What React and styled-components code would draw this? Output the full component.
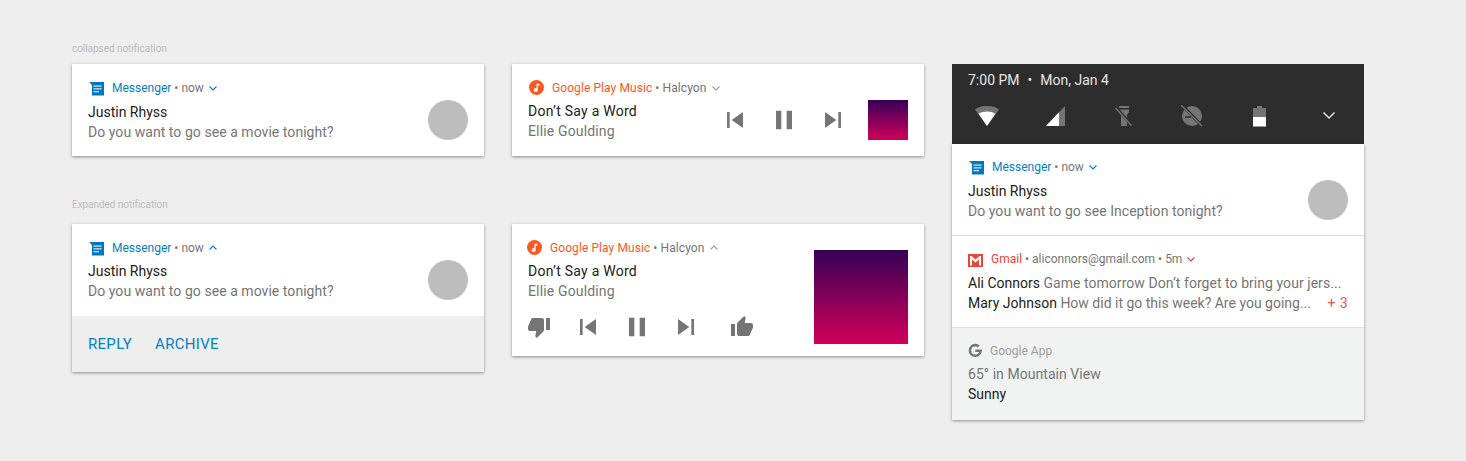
import React from "react";
import styled, { createGlobalStyle } from "styled-components";

const Global = createGlobalStyle`
  html, body { margin: 0; padding: 0; background: #eeeeee; }
  body { font-family: Roboto, "Liberation Sans", sans-serif; -webkit-font-smoothing: antialiased; }
`;

const Page = styled.div`
  width: 1466px; height: 461px; box-sizing: border-box; overflow: hidden;
  padding: 42px 0 0 72px;
  display: grid;
  grid-template-columns: 412px 412px 412px;
  grid-template-rows: 22px 92px 68px auto;
  column-gap: 28px;
`;
const Caption = styled.div`
  font-size: 10px; line-height: 12px; color: #bbbbbb; letter-spacing: -.05px;
  grid-column: 1;
  grid-row: ${p => p.$row};
  align-self: ${p => (p.$low ? "end" : "start")};
  margin-top: ${p => (p.$low ? "0" : "1px")};
  margin-bottom: ${p => (p.$low ? "13px" : "0")};
`;
const Card = styled.section`
  background: #fff;
  box-shadow: 0 1px 3px rgba(0,0,0,.42);
  align-self: ${p => (p.$col ? "start" : "stretch")};
  grid-column: ${p => p.$col};
  grid-row: ${p => p.$row};
`;
const SideColumn = styled.div`
  grid-column: 3; grid-row: 2 / 5;
  align-self: start;
  display: flex; flex-direction: column;
`;
const QuickBar = styled.div`
  background: #2d2d2d; height: 80px; box-sizing: border-box; padding: 8px 16px 0;
`;
const Clock = styled.div`
  color: #e6e6e6; font-size: 14px; line-height: 16px; display: flex; gap: 8px;
`;
const QuickIcons = styled.div`
  display: flex; margin: 16px 0 0 7px; height: 24px; align-items: center;
`;
const QuickSlot = styled.span`
  display: flex; width: ${p => p.$w}px;
`;
const Section = styled.div`
  display: flex; align-items: flex-start;
  box-sizing: border-box;
  height: ${p => p.$h}px;
  padding: ${p => p.$top ?? 16}px 16px 0;
  background: ${p => p.$bg || "#fff"};
  border-top: ${p => (p.$rule ? "1px solid #dcdcdc" : "0")};
`;
const Main = styled.div`
  flex: 1; min-width: 0;
`;
const Header = styled.div`
  display: flex; align-items: center; height: 16px; font-size: 12px; line-height: 16px;
  margin-left: ${p => p.$shift ?? 1}px;
  letter-spacing: ${p => p.$track ?? 0}px;
  color: #757575;
  white-space: pre;
`;
const HeadIcon = styled.span`
  display: flex; flex: none; width: 16px; height: 16px;
`;
const AppName = styled.span`
  color: ${p => p.$c}; margin-left: ${p => p.$gap ?? 7}px;
`;
const Caret = styled.svg`
  width: 10px; height: 10px; margin-left: ${p => p.$gap ?? 4}px; flex: none;
  fill: none; stroke: ${p => p.$c}; stroke-width: 1.1;
`;
const Title = styled.div`
  font-size: 14px; line-height: 20px; color: #212121;
  margin-top: ${p => p.$top ?? 6}px; white-space: pre;
  letter-spacing: ${p => p.$track ?? 0}px;
`;
const Body = styled.div`
  font-size: 14px; line-height: 20px; color: #757575; white-space: pre;
  letter-spacing: ${p => p.$track ?? 0.05}px;
  margin-top: ${p => p.$top ?? 0}px;
  display: flex; justify-content: space-between;
`;
const Strong = styled.span`color: #212121;`;
const Muted = styled.span`color: #757575; letter-spacing: .05px;`;
const Count = styled.span`color: #e8564a; letter-spacing: .4px;`;
const Avatar = styled.div`
  width: 40px; height: 40px; border-radius: 50%; background: #bdbdbd; flex: none;
  margin-top: ${p => p.$top ?? 20}px;
`;
const Actions = styled.div`
  background: #eeeeee; height: 56px; display: flex; align-items: center; gap: 23px; padding-left: 16px;
`;
const Action = styled.span`
  color: #0280c8; font-size: 15px; letter-spacing: .3px;
`;
const Album = styled.div`
  width: ${p => p.$s}px; height: ${p => p.$s}px; flex: none; margin-top: ${p => p.$top}px;
  background: linear-gradient(#370058, #d1005a);
`;
const Controls = styled.div`
  display: flex; flex: none; align-items: center; align-self: flex-start;
  margin: ${p => p.$m};
  gap: ${p => p.$gap}px;
`;
const IconGlyph = styled.svg`
  width: ${p => p.$s || 32}px; height: ${p => p.$s || 32}px; fill: #757575; flex: none; display: block;
`;
const Thumb = styled(IconGlyph)`
  margin: ${p => p.$m};
`;
const MusicCard = styled.div`
  display: flex; padding: ${p => p.$p}; box-sizing: border-box; height: ${p => p.$h}px;
`;

const P = {
  prev: "M6 6h2v12H6zm3.5 6l8.5 6V6z",
  pause: "M6 19h4V5H6v14zm8-14v14h4V5h-4z",
  next: "M6 18l8.5-6L6 6v12zM16 6v12h2V6h-2z",
  up: "M1 21h4V9H1v12zm22-11c0-1.1-.9-2-2-2h-6.31l.95-4.57.03-.32c0-.41-.17-.79-.44-1.06L14.17 1 7.59 7.59C7.22 7.95 7 8.45 7 9v10c0 1.1.9 2 2 2h9c.83 0 1.54-.5 1.84-1.22l3.02-7.05c.09-.23.14-.47.14-.73v-2z",
  down: "M15 3H6c-.83 0-1.54.5-1.84 1.22l-3.02 7.05c-.09.23-.14.47-.14.73v2c0 1.1.9 2 2 2h6.31l-.95 4.57-.03.32c0 .41.17.79.44 1.06L9.83 23l6.59-6.59c.36-.36.58-.86.58-1.41V5c0-1.1-.9-2-2-2zm4 0v12h4V3h-4z",
};
const Glyph = ({ d, s }) => <IconGlyph $s={s} viewBox="0 0 24 24"><path d={d} /></IconGlyph>;

const MessengerIcon = () => (
  <svg width="16" height="16" viewBox="0 -1 16 16">
    <path d="M0 1h15v13.500H3V4z" fill="#0277bd" />
    <path d="M4.500 4.500h8v1.200h-8zM4.500 7.200h8v1.200h-8zM4.500 10h5.500v1.200H4.500z" fill="#cfe8f6" />
  </svg>
);
const MusicIcon = () => (
  <svg width="16" height="16" viewBox="0 0 16 16">
    <circle cx="7.500" cy="7.500" r="7.500" fill="#ff5722" />
    <path d="M7.500 3.800h3v1.800H8.700v4.400a2 2 0 1 1-1.200-1.800z" fill="#fff" />
  </svg>
);
const GmailIcon = () => (
  <svg width="16" height="16" viewBox="0 -2 16 16">
    <rect y="1" width="15" height="13" fill="#e8453c" />
    <path d="M2 12.500V3h1.500l4 3.600L11.500 3H13v9.500h-2V6.400L7.500 9.500 4 6.400v6.100z" fill="#fff" />
  </svg>
);
const GoogleIcon = () => (
  <svg width="16" height="16" viewBox="0 0 16 16">
    <path d="M7.300.8a6.600 6.600 0 1 0 0 13.200c3.800 0 6.500-2.700 6.500-6.400 0-.5 0-.8-.1-1.200H7.300v2.500H11c-.4 1.700-1.800 2.700-3.700 2.700a4 4 0 0 1 0-8.200c1 0 1.900.3 2.600 1l1.900-1.900A6.400 6.400 0 0 0 7.300.8z" fill="#757575" />
  </svg>
);

const Head = ({ icon, name, color, rest, caret = "down", caretColor, gap, caretGap, shift, track }) => (
  <Header $shift={shift} $track={track}>
    <HeadIcon>{icon}</HeadIcon>
    <AppName $c={color} $gap={gap}>{name}</AppName>{rest}
    <Caret $c={caretColor || color} $gap={caretGap} viewBox="0 0 10 10">
      <path d={caret === "down" ? "M1.500 3.500 5 7l3.500-3.500" : "M1.500 6.500 5 3l3.500 3.500"} />
    </Caret>
  </Header>
);

const Messenger = ({ caret, titleTop, text, avatarTop }) => (
  <>
    <Main>
      <Head icon={<MessengerIcon />} name="Messenger" color="#0280c8" rest=" • now" caret={caret} />
      <Title $top={titleTop}>Justin Rhyss</Title>
      <Body>{text}</Body>
    </Main>
    <Avatar $top={avatarTop} />
  </>
);

const WifiIcon = () => (
  <svg width="24" height="24" viewBox="0 0 24 24">
    <path d="M0 5.500C3 3 7.200 2 12 2s9 1 12 3.500L12 22z" fill="#757575" />
    <path d="M3.600 9.800C6 8.300 8.800 7.500 12 7.500s6 .8 8.400 2.300L12 22z" fill="#fff" />
  </svg>
);
const SignalIcon = () => (
  <svg width="20" height="22" viewBox="0 0 20 22">
    <path d="M0 21 19 1v20z" fill="#757575" />
    <path d="M0 21 13 7.300V21z" fill="#fff" />
  </svg>
);
const FlashIcon = () => (
  <svg width="20" height="22" viewBox="0 0 20 22">
    <path d="M5 1h10v2H5zM5 4.500h10V7l-2 3v11H7V10L5 7z" fill="#757575" />
    <path d="M2.800 3.500l15 17" stroke="#2d2d2d" strokeWidth="3" />
    <path d="M1.500 3l16 17.800" stroke="#757575" strokeWidth="1.400" />
  </svg>
);
const CircleOffIcon = () => (
  <svg width="22" height="22" viewBox="0 0 22 22">
    <circle cx="11" cy="11" r="10" fill="#757575" />
    <path d="M4 12h6" stroke="#2d2d2d" strokeWidth="1.500" />
    <path d="M1 0l20 21" stroke="#2d2d2d" strokeWidth="3" />
    <path d="M0 0l21 21" stroke="#757575" strokeWidth="1.300" />
  </svg>
);
const BatteryIcon = () => (
  <svg width="14" height="22" viewBox="0 0 14 22">
    <path d="M4 1h5v2h4v9H0V3h4z" fill="#757575" />
    <rect y="12" width="13" height="9.500" fill="#fff" />
  </svg>
);
const DownIcon = () => (
  <svg width="14" height="10" viewBox="0 1 14 10" fill="none">
    <path d="M1.500 2.500 7 8l5.500-5.500" stroke="#e6e6e6" strokeWidth="1.500" />
  </svg>
);

export default function App() {
  const q = "Do you want to go see a movie tonight?";
  return (
    <>
      <Global />
      <Page>
        <Caption $row={1}>collapsed notification</Caption>
        <Card $col={1} $row={2}>
          <Section $h={92}>
            <Messenger text={q} />
          </Section>
        </Card>
        <Card $col={2} $row={2}>
          <MusicCard $h={92} $p="16px 16px 0">
            <Main>
              <Head icon={<MusicIcon />} name="Google Play Music" color="#ff5722" rest=" • Halcyon" caretColor="#9e9e9e" gap={7} caretGap={5} shift={1} track={0.08} />
              <Title $top={5} $track={0.25}>Don’t Say a Word</Title>
              <Body $track={0.15}>Ellie Goulding</Body>
            </Main>
            <Controls $m="24px 19px 0 0" $gap={17}>
              <Glyph d={P.prev} /><Glyph d={P.pause} /><Glyph d={P.next} />
            </Controls>
            <Album $s={40} $top={20} />
          </MusicCard>
        </Card>
        <Caption $low $row={3}>Expanded notification</Caption>
        <Card $col={1} $row={4}>
          <Section $h={92}>
            <Messenger caret="up" text={q} titleTop={5} />
          </Section>
          <Actions>
            <Action>REPLY</Action>
            <Action>ARCHIVE</Action>
          </Actions>
        </Card>
        <Card $col={2} $row={4}>
          <MusicCard $h={132} $p="16px 16px 0">
            <Main>
              <Head icon={<MusicIcon />} name="Google Play Music" color="#ff5722" rest=" • Halcyon" caret="up" caretColor="#9e9e9e" gap={7} caretGap={5} shift={-1} track={0.08} />
              <Title $top={5} $track={0.25}>Don’t Say a Word</Title>
              <Body $track={0.15}>Ellie Goulding</Body>
              <Controls $m="10px 0 0 0" $gap={17}>
                <Thumb $s={24} $m="0 4px 0 -1px" viewBox="0 0 24 24"><path d={P.down} /></Thumb>
                <Glyph d={P.prev} /><Glyph d={P.pause} /><Glyph d={P.next} />
                <Thumb $s={24} $m="0 0 0 11px" viewBox="0 0 24 24"><path d={P.up} /></Thumb>
              </Controls>
            </Main>
            <Album $s={94} $top={10} />
          </MusicCard>
        </Card>
        <SideColumn>
          <QuickBar>
            <Clock><span>7:00 PM</span><span>•</span><span>Mon, Jan 4</span></Clock>
            <QuickIcons>
              <QuickSlot $w={71}><WifiIcon /></QuickSlot>
              <QuickSlot $w={68}><SignalIcon /></QuickSlot>
              <QuickSlot $w={67}><FlashIcon /></QuickSlot>
              <QuickSlot $w={72}><CircleOffIcon /></QuickSlot>
              <QuickSlot $w={69}><BatteryIcon /></QuickSlot>
              <QuickSlot $w={20}><DownIcon /></QuickSlot>
            </QuickIcons>
          </QuickBar>
          <Card>
            <Section $h={91} $top={15}>
              <Messenger text="Do you want to go see Inception tonight?" avatarTop={21} />
            </Section>
            <Section $h={92} $top={15} $rule>
              <Main>
                <Head icon={<GmailIcon />} name="Gmail" color="#e8453c" rest=" • aliconnors@gmail.com • 5m" gap={7} shift={0} />
                <Title $top={6}>Ali Connors <Muted>Game tomorrow Don’t forget to bring your jers...</Muted></Title>
                <Body $track={0}><span><Strong>Mary Johnson</Strong> How did it go this week? Are you going...</span><Count>+ 3</Count></Body>
              </Main>
            </Section>
            <Section $h={93} $top={15} $rule $bg="#f1f2f2">
              <Main>
                <Head icon={<GoogleIcon />} name="Google App" color="#9e9e9e" rest="" gap={6} shift={0} caretColor="transparent" />
                <Body $top={5}>65° in Mountain View</Body>
                <Title $top={0}>Sunny</Title>
              </Main>
            </Section>
          </Card>
        </SideColumn>
      </Page>
    </>
  );
}
